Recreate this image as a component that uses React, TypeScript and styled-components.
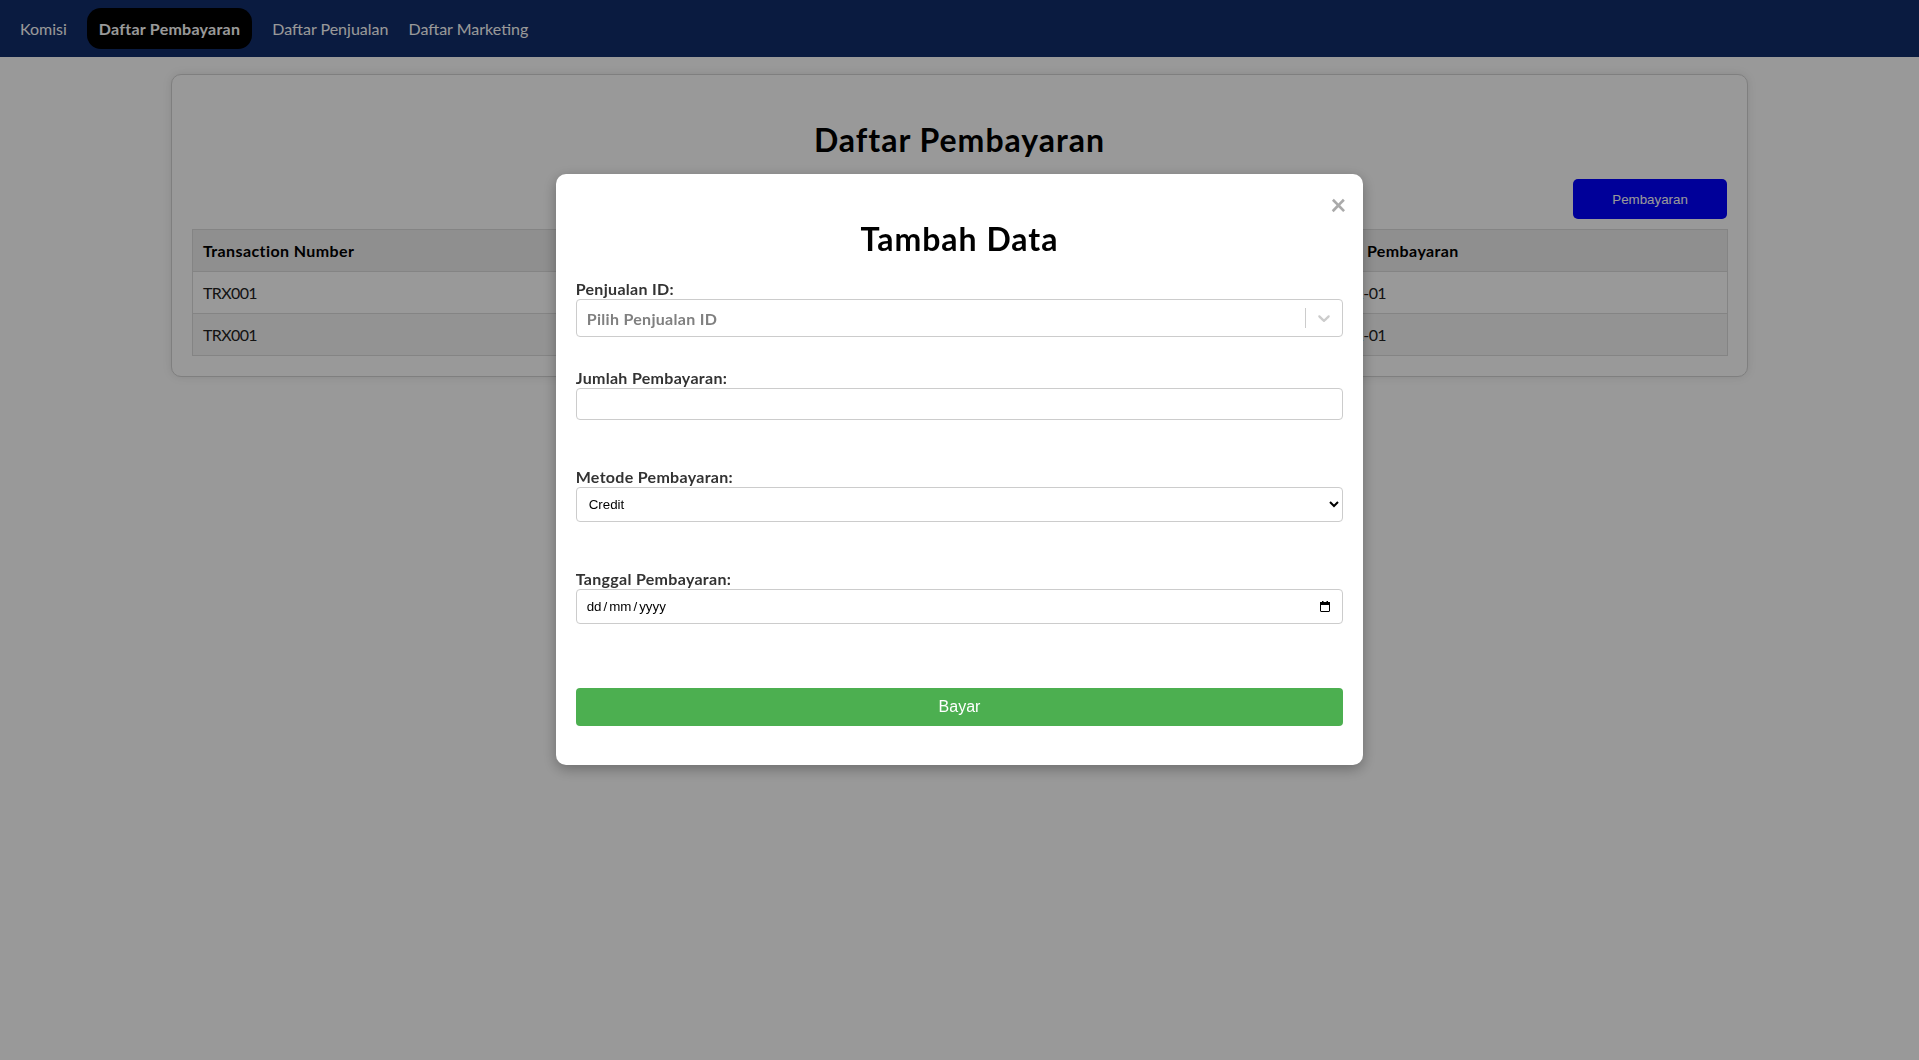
import React from 'react';
import styled, { createGlobalStyle } from 'styled-components';

const GlobalStyle = createGlobalStyle`
  html, body { margin: 0; padding: 0; background: #ffffff; }
  body { font-family: Lato, "Open Sans", sans-serif; color: #000; }
  *, *::before, *::after { box-sizing: border-box; }
`;

const Page = styled.div`
  min-height: 1060px;
  background: #ffffff;
`;

const NavBar = styled.nav`
  height: 57px;
  background: #122d6b;
  display: flex;
  align-items: center;
  gap: 20px;
  padding: 0 20px;
`;

const NavLink = styled.a<{ $active?: boolean }>`
  font-size: 16px;
  line-height: 21px;
  color: #ffffff;
  text-decoration: none;
  padding: 10px ${(p) => (p.$active ? '12px' : '0')};
  border-radius: 14px;
  background: ${(p) => (p.$active ? '#000000' : 'transparent')};
  font-weight: ${(p) => (p.$active ? 700 : 400)};
  letter-spacing: ${(p) => (p.$active ? '0.25px' : '0')};
  cursor: pointer;
`;

const Card = styled.section`
  box-sizing: content-box;
  width: 80%;
  margin: 17px auto 0;
  padding: 20px;
  border: 1px solid #d4d4d4;
  border-radius: 10px;
  background: #ffffff;
  box-shadow: 0 0 10px rgba(0, 0, 0, 0.1);
`;

const Title = styled.h1`
  margin: 24px 0 18px;
  font-size: 32px;
  line-height: 42px;
  font-weight: 700;
  letter-spacing: 1px;
  text-align: center;
  color: #000;
`;

const ToolRow = styled.div`
  display: flex;
  justify-content: flex-end;
  margin-bottom: 10px;
`;

const AddButton = styled.button`
  width: 154px;
  height: 40px;
  border: none;
  border-radius: 5px;
  background: #0000ff;
  color: #ffffff;
  font-family: "Liberation Sans", Arial, sans-serif;
  font-size: 13.333px;
  cursor: pointer;
`;

const Table = styled.table`
  width: 100%;
  border-collapse: collapse;
  table-layout: fixed;
`;

const Col = styled.col<{ $w: number }>`
  width: ${(p) => p.$w}px;
`;

const Th = styled.th`
  background: #eeeeee;
  border: 1px solid #dddddd;
  padding: 11px 10px;
  line-height: 19px;
  font-size: 16px;
  font-weight: 700;
  letter-spacing: 0.4px;
  text-align: left;
  color: #000;
`;

const Tr = styled.tr`
  &:nth-child(even) td { background: #f6f6f6; }
`;

const Td = styled.td`
  border: 1px solid #dddddd;
  padding: 11px 10px;
  line-height: 19px;
  font-size: 16px;
  letter-spacing: -0.6px;
  color: #222;
  background: #ffffff;
`;

const Overlay = styled.div`
  position: fixed;
  inset: 0;
  background: rgba(0, 0, 0, 0.4);
  display: flex;
  justify-content: center;
  align-items: flex-start;
  padding-top: 174px;
`;

const Modal = styled.div`
  position: relative;
  box-sizing: content-box;
  width: 40%;
  padding: 20px 20px 39px;
  background: #ffffff;
  border-radius: 10px;
  box-shadow: 0 4px 14px rgba(0, 0, 0, 0.3);
`;

const CloseButton = styled.button`
  position: absolute;
  top: 16px;
  right: 11px;
  width: 28px;
  height: 28px;
  padding: 0;
  border: none;
  background: transparent;
  color: #aaaaaa;
  font-family: Lato, sans-serif;
  font-size: 28px;
  font-weight: 700;
  line-height: 28px;
  cursor: pointer;
`;

const ModalTitle = styled.h2`
  margin: 24px 0 18px;
  font-size: 32px;
  line-height: 42px;
  font-weight: 700;
  letter-spacing: 1px;
  text-align: center;
  color: #000;
`;

const Field = styled.div`
  display: flex;
  flex-direction: column;
  margin-bottom: 30px;
`;

const Label = styled.label`
  display: block;
  font-size: 16px;
  line-height: 21px;
  font-weight: 700;
  letter-spacing: 0.3px;
  color: #333333;
`;

const RSControl = styled.div`
  display: flex;
  align-items: center;
  height: 38px;
  border: 1px solid #cccccc;
  border-radius: 4px;
  background: #ffffff;
`;

const RSValue = styled.div`
  flex: 1;
  padding: 2px 8px;
`;

const RSPlaceholder = styled.span`
  margin: 0 2px;
  font-size: 16px;
  font-weight: 700;
  letter-spacing: 0.3px;
  color: #808080;
`;

const RSSeparator = styled.span`
  align-self: stretch;
  width: 1px;
  margin: 8px 0;
  background: #cccccc;
`;

const RSIndicator = styled.div`
  display: flex;
  padding: 8px;
  color: #cccccc;
`;

const TextInput = styled.input`
  display: block;
  width: 100%;
  height: 32px;
  margin: 0 0 16px;
  padding: 0 8px;
  border: 1px solid #cccccc;
  border-radius: 4px;
  font-family: "Liberation Sans", Arial, sans-serif;
  font-size: 13.333px;
`;

const NativeSelect = styled.select`
  display: block;
  width: 100%;
  height: 35px;
  margin: 0 0 16px;
  padding: 0 8px;
  border: 1px solid #cccccc;
  border-radius: 4px;
  background: #ffffff;
  color: #000;
  font-family: "Liberation Sans", Arial, sans-serif;
  font-size: 13.333px;
`;

const DateBox = styled.div`
  display: flex;
  align-items: center;
  justify-content: space-between;
  height: 35px;
  margin-bottom: 16px;
  padding: 0 12px 0 10px;
  border: 1px solid #cccccc;
  border-radius: 4px;
  background: #ffffff;
  font-family: "Liberation Sans", Arial, sans-serif;
  font-size: 13.333px;
  color: #000;
`;

const DateText = styled.span`
  display: flex;
  gap: 2px;
`;

const SubmitButton = styled.button`
  display: block;
  width: 100%;
  height: 38px;
  margin-top: 48px;
  border: none;
  border-radius: 4px;
  background: #4caf50;
  color: #ffffff;
  font-family: "Liberation Sans", Arial, sans-serif;
  font-size: 16px;
  cursor: pointer;
`;

const rows = [
  { trx: 'TRX001', jumlah: '100000', metode: 'Credit', tanggal: '2024-01-01' },
  { trx: 'TRX001', jumlah: '100000', metode: 'Credit', tanggal: '2024-01-01' },
];

export default function App() {
  return (
    <Page>
      <GlobalStyle />
      <NavBar>
        <NavLink>Komisi</NavLink>
        <NavLink $active>Daftar Pembayaran</NavLink>
        <NavLink>Daftar Penjualan</NavLink>
        <NavLink>Daftar Marketing</NavLink>
      </NavBar>

      <Card>
        <Title>Daftar Pembayaran</Title>
        <ToolRow>
          <AddButton>Pembayaran</AddButton>
        </ToolRow>
        <Table>
          <colgroup>
            <Col $w={366} />
            <Col $w={366} />
            <Col $w={371} />
            <Col $w={432} />
          </colgroup>
          <thead>
            <tr>
              <Th>Transaction Number</Th>
              <Th>Jumlah Pembayaran</Th>
              <Th>Metode Pembayaran</Th>
              <Th>Tanggal Pembayaran</Th>
            </tr>
          </thead>
          <tbody>
            {rows.map((r, i) => (
              <Tr key={i}>
                <Td>{r.trx}</Td>
                <Td>{r.jumlah}</Td>
                <Td>{r.metode}</Td>
                <Td>{r.tanggal}</Td>
              </Tr>
            ))}
          </tbody>
        </Table>
      </Card>

      <Overlay>
        <Modal>
          <CloseButton aria-label="close">×</CloseButton>
          <ModalTitle>Tambah Data</ModalTitle>

          <Field>
            <Label>Penjualan ID:</Label>
            <RSControl>
              <RSValue>
                <RSPlaceholder>Pilih Penjualan ID</RSPlaceholder>
              </RSValue>
              <RSSeparator />
              <RSIndicator>
                <svg width="20" height="20" viewBox="0 0 20 20" fill="currentColor">
                  <path d="M4.516 7.548c0.436-0.446 1.043-0.481 1.576 0l3.908 3.747 3.908-3.747c0.533-0.481 1.141-0.446 1.574 0 0.436 0.445 0.408 1.197 0 1.615-0.406 0.418-4.695 4.502-4.695 4.502-0.217 0.223-0.502 0.335-0.787 0.335s-0.57-0.112-0.789-0.335c0 0-4.287-4.084-4.695-4.502s-0.436-1.170 0-1.615z" />
                </svg>
              </RSIndicator>
            </RSControl>
          </Field>

          <Field>
            <Label>Jumlah Pembayaran:</Label>
            <TextInput type="text" />
          </Field>

          <Field>
            <Label>Metode Pembayaran:</Label>
            <NativeSelect defaultValue="Credit">
              <option value="Credit">Credit</option>
              <option value="Debit">Debit</option>
              <option value="Cash">Cash</option>
            </NativeSelect>
          </Field>

          <Field>
            <Label>Tanggal Pembayaran:</Label>
            <DateBox>
              <DateText>
                <span>dd</span>
                <span>/</span>
                <span>mm</span>
                <span>/</span>
                <span>yyyy</span>
              </DateText>
              <svg width="10" height="11" viewBox="0 0 10 11">
                <rect x="0.5" y="1.5" width="9" height="9" rx="0.5" fill="none" stroke="#000" strokeWidth="1" />
                <rect x="0" y="1" width="10" height="3" fill="#000" />
                <rect x="2" y="0" width="1.5" height="2" fill="#000" />
                <rect x="6.5" y="0" width="1.5" height="2" fill="#000" />
              </svg>
            </DateBox>
          </Field>

          <SubmitButton>Bayar</SubmitButton>
        </Modal>
      </Overlay>
    </Page>
  );
}
